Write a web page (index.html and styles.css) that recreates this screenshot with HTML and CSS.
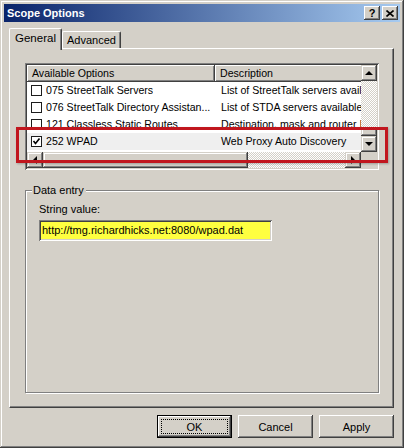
FILE: index.html
```html
<!DOCTYPE html>
<html lang="en">
<head>
  <meta charset="UTF-8" />
  <title>Scope Options</title>
  <link rel="stylesheet" href="styles.css">
</head>
<body>
  <div class="window">
    <!-- Title bar -->
    <div class="titlebar">
      <span class="title">Scope Options</span>
      <div class="caption-buttons">
        <span class="cap-btn">?</span>
        <span class="cap-btn">
          <svg width="8" height="7" viewBox="0 0 8 7"><path d="M0.5 0.5 L7.5 6.5 M7.5 0.5 L0.5 6.5" stroke="#000" stroke-width="1.6"/></svg>
        </span>
      </div>
    </div>

    <div class="content">
      <!-- Tabs -->
      <div class="tabs">
        <div class="tab active">General</div>
        <div class="tab">Advanced</div>
      </div>

      <div class="panel">
        <!-- Options list -->
        <div class="listview">
          <div class="lv-main">
            <div class="lv-header">
              <div class="hcol c1">Available Options</div>
              <div class="hcol c2">Description</div>
            </div>
            <div class="row">
              <div class="c1"><span class="check"></span><span class="name">075 StreetTalk Servers</span></div>
              <div class="c2">List of StreetTalk servers avail</div>
            </div>
            <div class="row">
              <div class="c1"><span class="check"></span><span class="name">076 StreetTalk Directory Assistan...</span></div>
              <div class="c2">List of STDA servers available</div>
            </div>
            <div class="row">
              <div class="c1"><span class="check"></span><span class="name">121 Classless Static Routes</span></div>
              <div class="c2">Destination, mask and router I</div>
            </div>
            <div class="row selected">
              <div class="c1">
                <span class="check"><svg width="9" height="9" viewBox="0 0 9 9"><path d="M1.5 4 L3.5 6.5 L7.5 1.5" fill="none" stroke="#000" stroke-width="1.6"/></svg></span><span class="name">252 WPAD</span>
              </div>
              <div class="c2">Web Proxy Auto Discovery</div>
            </div>
          </div>
          <div class="vscroll">
            <div class="sbtn"><span class="arrow up"></span></div>
            <div class="track"></div>
            <div class="thumb-v"></div>
            <div class="sbtn"><span class="arrow down"></span></div>
          </div>
          <div class="hscroll">
            <div class="sbtn"><span class="arrow left"></span></div>
            <div class="thumb-h"></div>
            <div class="track"></div>
            <div class="sbtn"><span class="arrow right"></span></div>
          </div>
          <div class="corner"></div>
        </div>

        <!-- Data entry -->
        <fieldset class="group">
          <legend>Data entry</legend>
          <div class="field-label">String value:</div>
          <div class="textbox">http://tmg.richardhicks.net:8080/wpad.dat</div>
        </fieldset>
      </div>

      <!-- Dialog buttons -->
      <div class="buttons">
        <button class="btn default"><span class="focus">OK</span></button>
        <button class="btn">Cancel</button>
        <button class="btn">Apply</button>
      </div>
    </div>

    <!-- Red highlight drawn over the screenshot -->
    <div class="callout"></div>
  </div>
</body>
</html>
```

FILE: styles.css
```css
:root {
  --face: #d4d0c8;
  --light: #ffffff;
  --shadow: #808080;
  --dark: #404040;
  --font: "Liberation Sans", Arial, sans-serif;
}

* {
  box-sizing: border-box;
}

body {
  margin: 0;
  background: var(--face);
  font-family: var(--font);
  font-size: 11px;
  color: #000;
}

/* Window frame */
.window {
  position: relative;
  width: 404px;
  height: 448px;
  padding: 4px;
  display: flex;
  flex-direction: column;
  background: var(--face);
  box-shadow: inset -1px -1px var(--dark), inset 1px 1px var(--face),
              inset -2px -2px var(--shadow), inset 2px 2px var(--light);
}

.titlebar {
  height: 18px;
  display: flex;
  align-items: center;
  justify-content: space-between;
  padding: 0 2px 0 3px;
  background: linear-gradient(to right, #0a246a, #a6caf0);
}
.title {
  color: #fff;
  font-weight: bold;
  font-size: 11px;
}
.caption-buttons {
  display: flex;
  gap: 2px;
}
.cap-btn {
  width: 16px;
  height: 14px;
  display: flex;
  align-items: center;
  justify-content: center;
  font-weight: bold;
  font-size: 11px;
  background: var(--face);
  box-shadow: inset -1px -1px var(--dark), inset 1px 1px var(--light),
              inset -2px -2px var(--shadow);
}

.content {
  flex: 1;
  display: flex;
  flex-direction: column;
  padding: 6px 6px 6px 5px;
}

/* Tabs */
.tabs {
  display: flex;
  align-items: flex-end;
  height: 20px;
  position: relative;
  z-index: 1;
}
.tab {
  height: 17px;
  line-height: 16px;
  text-align: center;
  background: var(--face);
  border-top: 1px solid var(--light);
  border-left: 1px solid var(--light);
  border-right: 1px solid var(--dark);
  border-radius: 2px 2px 0 0;
  box-shadow: inset -1px 0 var(--shadow);
}
.tab:not(.active) {
  width: 59px;
}
.tab.active {
  width: 53px;
  height: 22px;
  margin-bottom: -2px;
  line-height: 19px;
  font-size: 11.5px;
}

.panel {
  flex: 1;
  display: flex;
  flex-direction: column;
  padding: 14px 14px 14px 15px;
  border-top: 1px solid var(--light);
  border-left: 1px solid var(--light);
  border-right: 1px solid var(--dark);
  border-bottom: 1px solid var(--dark);
  box-shadow: inset -1px -1px var(--shadow);
}

/* List view */
.listview {
  height: 107px;
  padding: 2px;
  display: grid;
  grid-template-columns: 1fr 16px;
  grid-template-rows: 1fr 16px;
  background: #fff;
  font-size: 10.6px;
  box-shadow: inset 1px 1px var(--shadow), inset -1px -1px var(--light),
              inset 2px 2px var(--dark), inset -2px -2px var(--face);
}
.lv-main {
  overflow: hidden;
}
.lv-header {
  display: flex;
  height: 17px;
}
.hcol {
  flex: none;
  line-height: 17px;
  padding-left: 5px;
  background: var(--face);
  box-shadow: inset -1px -1px var(--dark), inset 1px 1px var(--light),
              inset -2px -2px var(--shadow);
}
.c1 {
  flex: none;
  width: 188px;
}
.c2 {
  flex: none;
  width: 220px;
}
.row {
  display: flex;
  height: 17px;
  line-height: 17px;
  white-space: nowrap;
}
.row .c1 {
  display: flex;
  align-items: center;
  padding: 0 2px 0 4px;
}
.name {
  overflow: hidden;
}
.row .c2 {
  padding-left: 6px;
}
.row.selected {
  background: #efefef;
}
.check {
  flex: none;
  width: 11px;
  height: 11px;
  margin-right: 4px;
  display: flex;
  align-items: center;
  justify-content: center;
  background: #fff;
  border: 1px solid #1c1c1c;
}

/* Scroll bars */
.vscroll {
  display: flex;
  flex-direction: column;
}
.hscroll {
  display: flex;
}
.track {
  flex: 1;
  background: repeating-conic-gradient(var(--face) 0 25%, #fff 0 50%) 0 0 / 2px 2px;
}
.sbtn,
.thumb-v,
.thumb-h,
.corner {
  flex: none;
  background: var(--face);
}
.sbtn,
.thumb-v,
.thumb-h {
  box-shadow: inset -1px -1px var(--dark), inset 1px 1px var(--face),
              inset -2px -2px var(--shadow), inset 2px 2px var(--light);
}
.sbtn {
  width: 16px;
  height: 16px;
  display: flex;
  align-items: center;
  justify-content: center;
}
.thumb-v {
  height: 9px;
}
.thumb-h {
  width: 205px;
}
.arrow {
  width: 0;
  height: 0;
  border: 4px solid transparent;
}
.arrow.up { border-bottom-color: #000; border-top-width: 0; }
.arrow.down { border-top-color: #000; border-bottom-width: 0; }
.arrow.left { border-right-color: #000; border-left-width: 0; }
.arrow.right { border-left-color: #000; border-right-width: 0; }

/* Data entry group */
.group {
  flex: 1;
  margin: 14px 0 0;
  padding: 6px 13px 0;
  border: 1px solid var(--shadow);
  box-shadow: inset 1px 1px var(--light), 1px 1px var(--light);
}
.group legend {
  position: relative;
  margin-left: -7px;
  padding: 0 2px 0 1px;
  line-height: 13px;
  background: var(--face);
}
.field-label {
  line-height: 13px;
}
.textbox {
  width: 233px;
  height: 21px;
  margin-top: 4px;
  padding: 0 3px;
  line-height: 21px;
  white-space: nowrap;
  background: #ffff40;
  box-shadow: inset 1px 1px var(--shadow), inset -1px -1px var(--light),
              inset 2px 2px var(--dark), inset -2px -2px var(--face);
}

/* Dialog buttons */
.buttons {
  display: flex;
  justify-content: flex-end;
  gap: 6px;
  margin-top: 7px;
}
.btn {
  width: 75px;
  height: 23px;
  padding: 0;
  border: none;
  font-family: var(--font);
  font-size: 11px;
  color: #000;
  background: var(--face);
  box-shadow: inset -1px -1px var(--dark), inset 1px 1px var(--light),
              inset -2px -2px var(--shadow);
}
.btn.default {
  border: 1px solid #000;
  display: flex;
  padding: 3px;
}
.btn.default .focus {
  flex: 1;
  display: flex;
  align-items: center;
  justify-content: center;
  border: 1px dotted #000;
}

/* Red annotation box */
.callout {
  position: absolute;
  left: 16px;
  top: 127px;
  width: 372px;
  height: 36px;
  border: 3px solid #c1161e;
  box-shadow: 1px 1px 2px rgba(0, 0, 0, 0.25);
}
```
